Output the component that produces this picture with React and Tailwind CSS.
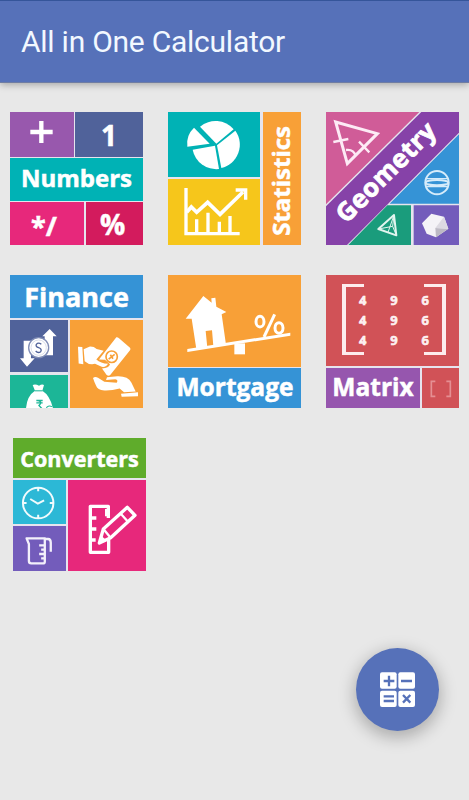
import React from "react";

const OPEN_SANS = "font-['Open_Sans','Noto_Sans',sans-serif] font-bold text-white leading-none whitespace-nowrap [-webkit-text-stroke:0.5px_white]";

// Icon that fills its whole cell
function Icon({ viewBox, children }) {
  return (
    <svg viewBox={viewBox} className="block h-full w-full" preserveAspectRatio="none" fill="none" stroke="none">
      {children}
    </svg>
  );
}

function Tile({ label, className = "", children }) {
  return (
    <button
      aria-label={label}
      className={`flex h-[133px] w-[133px] overflow-hidden bg-[#e6e4ee] text-left ${className}`}
    >
      {children}
    </button>
  );
}

function NumbersTile() {
  return (
    <Tile label="Numbers" className="flex-col gap-px">
      <div className="flex h-[45px] w-full gap-px">
        <div className="w-[64px] bg-[#9858ad]">
          <Icon viewBox="30 22 192 135">
            <path d="M91 82H158M124 49V115" stroke="#fff" strokeWidth="13" />
          </Icon>
        </div>
        <div className={`flex flex-1 items-center justify-center bg-[#50629a] text-[28px] ${OPEN_SANS}`}>1</div>
      </div>
      <div className="flex h-[43px] w-full items-center justify-center bg-[#00b2b5] pb-1">
        <span className={`text-[24px] ${OPEN_SANS}`}>Numbers</span>
      </div>
      <div className="flex w-full flex-1 gap-[2px]">
        <div className={`flex w-[74px] items-center justify-center bg-[#e7287b] pr-1.5 pt-1 text-[27px] ${OPEN_SANS}`}>*/</div>
        <div className={`flex flex-1 items-center justify-center bg-[#d31b5d] pr-1 text-[28px] ${OPEN_SANS}`}>%</div>
      </div>
    </Tile>
  );
}

function StatisticsTile() {
  return (
    <Tile label="Statistics" className="gap-[3px]">
      <div className="flex h-full w-[92px] flex-col gap-[2px]">
        <div className="h-[65px] bg-[#00b2b5]">
          <Icon viewBox="33 22 276 195">
            <g fill="#fff">
              <path d="M178 117L129 66A72 72 0 0 1 230 74Z" />
              <path d="M180 122L235 78A72 72 0 0 1 193 190Z" />
              <path d="M174 123L186 193A72 72 0 0 1 107 135Z" />
              <path d="M158 117L91 126A66 66 0 0 1 111 69Z" />
            </g>
          </Icon>
        </div>
        <div className="flex-1 bg-[#f6c61b]">
          <Icon viewBox="33 223 276 199">
            <g stroke="#fff" strokeWidth="10">
              <path d="M87 250V387H248" />
              <path d="M89 323L103 307L119 323L152 293L189 329L258 262" strokeWidth="11" />
              <path d="M236 256H266V285" />
              <path d="M119 344V385M153 324V385M187 351V385M219 334V385" />
            </g>
          </Icon>
        </div>
      </div>
      <div className="flex flex-1 items-center justify-center bg-[#f8a037] pr-[3px] pt-[4px]">
        <span className={`rotate-180 text-[24px] [writing-mode:vertical-rl] ${OPEN_SANS}`}>Statistics</span>
      </div>
    </Tile>
  );
}

// Diagonal artwork, so the whole tile is one drawing
function GeometryTile() {
  return (
    <Tile label="Geometry">
      <Icon viewBox="36 22 399 399">
        <path d="M36 22H316L36 299Z" fill="#d05c98" />
        <path d="M322 22H435V84L99 421H36V305Z" fill="#8642a8" />
        <path d="M435 89V297H227Z" fill="#3593d6" />
        <path d="M220 302H291V421H103Z" fill="#1a9c7c" />
        <path d="M299 302H435V421H299Z" fill="#735cbb" />
        <g stroke="#fdeaf5" strokeWidth="9">
          <path d="M65 52L190 87L100 177Z" />
          <path d="M96 136Q119 133 125 154" strokeWidth="7" />
          <path d="M58 112L103 103M135 111L166 143" strokeWidth="7" />
        </g>
        <g stroke="#d6ecfa" strokeWidth="6">
          <circle cx="369" cy="234" r="35" />
          <ellipse cx="369" cy="234" rx="34" ry="8" />
          <path d="M337 222H401M337 246H401" strokeWidth="4" />
        </g>
        <g stroke="#e2f5ef" strokeWidth="6" strokeLinejoin="round">
          <path d="M240 331L193 373L247 392Z" />
          <path d="M240 331L222 383M193 373L236 365L247 392M240 331L236 365" strokeWidth="3" />
        </g>
        {/* cube */}
        <path d="M352 327L390 336L403 372L366 398L338 387L324 356Z" fill="#f4f3f7" />
        <path d="M364 370L403 372L366 398Z" fill="#bdbac5" />
        <path d="M390 336L403 372L364 370Z" fill="#dcdae2" />
        <text
          transform="translate(97 359) rotate(-45)"
          textLength="388"
          className="fill-white stroke-white stroke-[2.5px] font-['Open_Sans','Noto_Sans',sans-serif] text-[76px] font-bold"
        >
          Geometry
        </text>
      </Icon>
    </Tile>
  );
}

function FinanceTile() {
  return (
    <Tile label="Finance" className="flex-col gap-[2px]">
      <div className="flex h-[43px] w-full items-center justify-center bg-[#3593d6] pb-px">
        <span className={`text-[27px] ${OPEN_SANS}`}>Finance</span>
      </div>
      <div className="flex w-full flex-1 gap-[2px]">
        <div className="flex w-[58px] flex-col gap-[3px]">
          <div className="h-[52px] bg-[#50629a]">
            <Icon viewBox="30 160 174 156">
              <g fill="#fff">
                <path d="M127 209L149 187L170 209H159V266H134V209Z" />
                <path d="M71 222H93V275H104L81 300L60 275H71Z" />
              </g>
              <circle cx="116" cy="243" r="30" fill="#fff" stroke="#7f8cb5" strokeWidth="4" />
              <circle cx="116" cy="243" r="23" stroke="#c5cbde" strokeWidth="2" />
              <path d="M124 233Q115 226 109 233Q106 240 116 243Q127 247 122 255Q114 261 107 253" stroke="#50629a" strokeWidth="4" />
            </Icon>
          </div>
          <div className="flex-1 bg-[#1cb697]">
            <Icon viewBox="30 325 174 96">
              <path d="M98 354Q107 351 117 356Q126 351 132 354L127 371Q150 385 159 422H78Q81 386 105 371Z" fill="#fff" />
              <path d="M104 371H128" stroke="#1cb697" strokeWidth="3" />
              <path d="M109 399H128M109 406H128M110 399Q130 401 117 414L127 424" stroke="#1cb697" strokeWidth="4" />
              <path d="M139 422Q142 412 157 417" stroke="#1cb697" strokeWidth="3" />
            </Icon>
          </div>
        </div>
        <div className="flex-1 bg-[#f8a037]">
          <Icon viewBox="210 160 219 261">
            <g fill="#fff">
              <path d="M234 239L247 240L250 291L236 289Z" />
              <path d="M251 247L268 239Q281 238 290 246L311 251L289 277Q302 289 324 290Q319 301 305 299L285 290Q267 294 254 282Z" />
              <path d="M349 211Q353 210 357 214L390 242Q393 246 390 250L330 324Q325 327 320 323L306 304Q327 302 330 291L315 278L297 277Z" />
              <path d="M279 332Q285 326 294 331L313 343L350 346Q356 339 346 336L318 338L321 330L352 327Q384 326 394 345L407 372L372 374L359 363Q334 370 313 369Q292 367 288 354Q282 342 279 332Z" />
              <path d="M363 379L414 374V386L365 388Z" />
            </g>
            <circle cx="335" cy="269" r="17" stroke="#f8a037" strokeWidth="5" />
            <path d="M326 276L344 262M331 263L339 275" stroke="#f8a037" strokeWidth="5" />
          </Icon>
        </div>
      </div>
    </Tile>
  );
}

function MortgageTile() {
  return (
    <Tile label="Mortgage" className="flex-col gap-px">
      <div className="h-[92px] w-full bg-[#f8a037]">
        <Icon viewBox="33 24 399 276">
          <g fill="#fff">
            <path d="M86 155L139 87L164 107L163 94L175 92L178 119L208 135L194 142L207 233L169 237L165 190L146 192L151 242L118 246L104 155Z" />
            <path d="M91 246L400 197V206L91 255Z" />
            <path d="M232 229H264V262H232Z" />
          </g>
          <g stroke="#fff" strokeWidth="9">
            <ellipse cx="309" cy="164" rx="12" ry="16" />
            <ellipse cx="366" cy="183" rx="12" ry="16" />
            <path d="M353 142L321 210" />
          </g>
        </Icon>
      </div>
      <div className="flex w-full flex-1 items-center justify-center bg-[#3593d6] pb-px pl-px">
        <span className={`text-[24.5px] ${OPEN_SANS}`}>Mortgage</span>
      </div>
    </Tile>
  );
}

const MATRIX = [4, 9, 6, 4, 9, 6, 4, 9, 6];

function MatrixTile() {
  return (
    <Tile label="Matrix" className="flex-col gap-[2px]">
      <div className="flex h-[91px] w-full justify-between bg-[#d15257] pb-[11px] pl-4 pr-[13px] pt-[9px]">
        <div className="w-[22px] border-y-[3px] border-l-[4px] border-[#fdeced]" />
        <div className={`-mx-[17px] grid flex-1 grid-cols-3 content-center justify-items-center gap-y-[6px] pt-0.5 text-[13px] ${OPEN_SANS}`}>
          {MATRIX.map((n, i) => (
            <span key={i} className="h-[14px] text-[#fdeced]">{n}</span>
          ))}
        </div>
        <div className="w-[22px] border-y-[3px] border-r-[4px] border-[#fdeced]" />
      </div>
      <div className="flex w-full flex-1 gap-[2px]">
        <div className="flex w-[94px] items-center justify-center bg-[#9656ae] pb-px">
          <span className={`text-[24.5px] ${OPEN_SANS}`}>Matrix</span>
        </div>
        <div className="flex-1 bg-[#d15257]">
          <Icon viewBox="324 302 111 120">
            <path d="M364 342H352V387H364M397 342H409V387H397" stroke="#e58f93" strokeWidth="5" />
          </Icon>
        </div>
      </div>
    </Tile>
  );
}

function ConvertersTile() {
  return (
    <Tile label="Converters" className="ml-[3px] flex-col gap-[2px]">
      <div className="flex h-[40px] w-full items-center justify-center bg-[#5fac2b] pt-px">
        <span className={`text-[21.5px] ${OPEN_SANS}`}>Converters</span>
      </div>
      <div className="flex w-full flex-1 gap-[2px]">
        <div className="flex w-[53px] flex-col gap-[2px]">
          <div className="h-[44px] bg-[#2cb8d6]">
            <Icon viewBox="39 148 160 132">
              <g stroke="#f0fbfd" strokeWidth="6">
                <circle cx="115" cy="217" r="46" />
                <path d="M91 205L114 219L133 209" />
                <path d="M115 170V182M115 252V264M68 217H80M150 217H162" />
              </g>
            </Icon>
          </div>
          <div className="flex-1 bg-[#735cbb]">
            <Icon viewBox="39 286 160 135">
              <g stroke="#f3f0fb" strokeWidth="7" strokeLinejoin="round">
                <path d="M80 323H135V393Q135 398 129 398H94Q87 398 87 391V340Z" />
                <path d="M135 325H145Q153 325 153 336V363M118 344H135M124 357H135M118 370H135M124 383H135" />
              </g>
            </Icon>
          </div>
        </div>
        <div className="flex-1 bg-[#e7287b]">
          <Icon viewBox="204 148 234 273">
            <g stroke="#fff" strokeWidth="10" strokeLinejoin="round">
              <path d="M325 262V227H271V365H326V326" />
              <path d="M276 262H289M276 295H289M276 328H287" />
              <path d="M298 337L310 295L382 230L405 254L332 321Z" />
              <path d="M361 248L384 273M312 297L330 319" strokeWidth="7" />
              <path d="M318 235V257" strokeWidth="6" />
            </g>
            <path d="M295 341L302 314L321 330Z" fill="#fff" />
          </Icon>
        </div>
      </div>
    </Tile>
  );
}

export default function App() {
  return (
    <div className="relative flex h-[800px] w-[469px] flex-col overflow-hidden bg-[#e8e8e8]">
      {/* App bar */}
      <header className="flex h-[83px] items-center border-b border-t border-b-[#6f7da3] border-t-[#35559a] bg-[#5671b9] pl-[21px] shadow-[0_2px_7px_rgba(0,0,0,0.28)]">
        <h1 className="font-[Roboto,sans-serif] text-[30px] leading-none tracking-[-0.25px] text-[#f2f8ff]">
          All in One Calculator
        </h1>
      </header>

      {/* Categories */}
      <main className="grid grid-cols-[133px_133px_133px] gap-x-[25px] gap-y-[30px] pl-[10px] pt-[29px]">
        <NumbersTile />
        <StatisticsTile />
        <GeometryTile />
        <FinanceTile />
        <MortgageTile />
        <MatrixTile />
        <ConvertersTile />
      </main>

      {/* Floating calculator button */}
      <button
        aria-label="Calculator"
        className="absolute bottom-[69px] right-[30px] h-[83px] w-[83px] rounded-full bg-[#5671b9] shadow-[0_5px_16px_2px_rgba(0,0,0,0.25)]"
      >
        <Icon viewBox="48 39 249 249">
          <g fill="#fff">
            <rect x="120" y="112" width="50" height="49" rx="6" />
            <rect x="175" y="112" width="50" height="49" rx="6" />
            <rect x="120" y="167" width="50" height="49" rx="6" />
            <rect x="175" y="167" width="50" height="49" rx="6" />
          </g>
          <g stroke="#5671b9" strokeWidth="7">
            <path d="M131 138H163M147 122V154M183 138H216" />
            <path d="M131 184H162M131 198H162M189 180L211 203M211 180L189 203" />
          </g>
        </Icon>
      </button>
    </div>
  );
}
